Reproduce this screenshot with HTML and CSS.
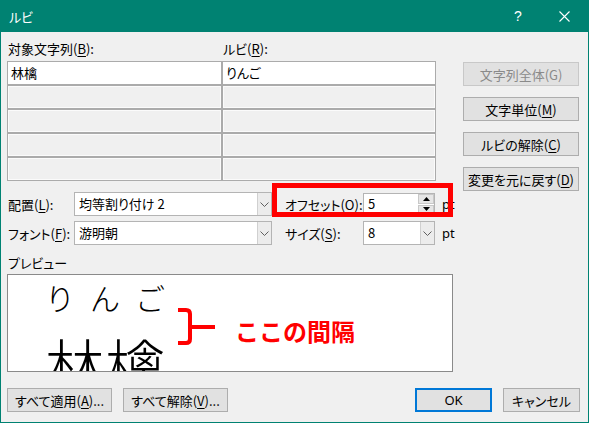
FILE: index.html
```html
<!DOCTYPE html>
<html lang="ja">
<head>
<meta charset="utf-8">
<title>ルビ</title>
<link rel="stylesheet" href="styles.css">
</head>
<body>
<div class="window">
  <div class="titlebar">
    <span class="title">ルビ</span>
    <span class="tb-btn help">?</span>
    <span class="tb-btn close">
      <svg width="11" height="11" viewBox="0 0 11 11"><path d="M0.5 0.5 L10.5 10.5 M10.5 0.5 L0.5 10.5" stroke="#fff" stroke-width="1.1" fill="none"/></svg>
    </span>
  </div>
  <div class="content">
    <div class="top">
      <div class="table-area">
        <div class="labels">
          <span class="lbl-base">対象文字列(<u>B</u>):</span>
          <span class="lbl-ruby">ルビ(<u>R</u>):</span>
        </div>
        <div class="grid">
          <div class="cell first">林檎</div>
          <div class="cell first">りんご</div>
          <div class="cell"></div><div class="cell"></div>
          <div class="cell"></div><div class="cell"></div>
          <div class="cell"></div><div class="cell"></div>
          <div class="cell"></div><div class="cell"></div>
        </div>
      </div>
      <div class="side">
        <div class="btn disabled">文字列全体(G)</div>
        <div class="btn">文字単位(<u>M</u>)</div>
        <div class="btn">ルビの解除(<u>C</u>)</div>
        <div class="btn">変更を元に戻す(<u>D</u>)</div>
      </div>
    </div>

    <div class="form">
      <div class="row">
        <span class="lbl1">配置(<u>L</u>):</span>
        <div class="combo wide"><span class="val">均等割り付け 2</span><span class="arrow"><svg width="9" height="5" viewBox="0 0 9 5"><path d="M0.5 0.5 L4.5 4.5 L8.5 0.5" stroke="#606060" fill="none"/></svg></span></div>
        <span class="lbl2">オフセット(<u>O</u>):</span>
        <div class="spin"><span class="val">5</span><span class="spin-btns"><span class="sb"><svg width="7" height="4" viewBox="0 0 7 4"><path d="M0 4 L3.5 0 L7 4 Z" fill="#000"/></svg></span><span class="sb"><svg width="7" height="4" viewBox="0 0 7 4"><path d="M0 0 L3.5 4 L7 0 Z" fill="#000"/></svg></span></span></div>
        <span class="unit">pt</span>
      </div>
      <div class="row">
        <span class="lbl1">フォント(<u>F</u>):</span>
        <div class="combo wide"><span class="val">游明朝</span><span class="arrow"><svg width="9" height="5" viewBox="0 0 9 5"><path d="M0.5 0.5 L4.5 4.5 L8.5 0.5" stroke="#606060" fill="none"/></svg></span></div>
        <span class="lbl2">サイズ(<u>S</u>):</span>
        <div class="combo small"><span class="val">8</span><span class="arrow"><svg width="9" height="5" viewBox="0 0 9 5"><path d="M0.5 0.5 L4.5 4.5 L8.5 0.5" stroke="#606060" fill="none"/></svg></span></div>
        <span class="unit">pt</span>
      </div>
    </div>

    <div class="preview-label">プレビュー</div>
    <div class="preview">
      <div class="word">
        <div class="ruby">りんご</div>
        <div class="base">林檎</div>
      </div>
      <div class="note">
        <svg class="bracket" width="37" height="39" viewBox="0 0 37 39"><path d="M0 2 H8 Q12 2 12 6 V31 Q12 35 8 35 H0 M12 19 H37" stroke="#ff0000" stroke-width="4" fill="none"/></svg>
        <span class="note-text">ここの間隔</span>
      </div>
    </div>

    <div class="footer">
      <div class="btn fbtn">すべて適用(<u>A</u>)...</div>
      <div class="btn fbtn">すべて解除(<u>V</u>)...</div>
      <div class="spacer"></div>
      <div class="btn ok">OK</div>
      <div class="btn cancel">キャンセル</div>
    </div>
  </div>
  <div class="highlight"></div>
</div>
</body>
</html>
```

FILE: styles.css
```css
html, body {
  margin: 0;
  padding: 0;
}
body {
  width: 589px;
  height: 423px;
  overflow: hidden;
  font-family: "Noto Sans CJK JP", "Noto Sans", sans-serif;
  font-size: 13px;
  color: #000;
  font-feature-settings: "palt";
}
u {
  text-decoration: underline;
  text-underline-offset: 2px;
}
.window {
  position: relative;
  width: 589px;
  height: 423px;
  box-sizing: border-box;
  border: 1px solid #008272;
  border-top: none;
  background: #f0f0f0;
}
.titlebar {
  height: 32px;
  background: #008272;
  color: #fff;
  display: flex;
  align-items: center;
  padding-left: 8px;
  padding-right: 1px;
}
.title {
  flex: 1;
  font-size: 13px;
}
.tb-btn {
  width: 46px;
  height: 32px;
  display: flex;
  align-items: center;
  justify-content: center;
}
.help {
  font-family: "Liberation Sans", sans-serif;
  font-size: 14px;
}
.content {
  padding: 8px 8px 0 6px;
}
.top {
  display: flex;
  gap: 27px;
  height: 151px;
}
.table-area {
  width: 429px;
}
.labels {
  display: flex;
  height: 21px;
  line-height: 17px;
}
.lbl-base {
  width: 215px;
  padding-left: 1px;
}
.grid {
  display: grid;
  grid-template-columns: 213px 212px;
  grid-auto-rows: 22px;
  gap: 2px;
  padding: 1px;
  background: #ababab;
}
.cell {
  background: #f0f0f0;
  box-shadow: inset 0 0 0 1px #fbfbfb;
  padding-left: 3px;
  line-height: 22px;
}
.cell.first {
  background: #fff;
  box-shadow: none;
}
.side {
  width: 116px;
  display: flex;
  flex-direction: column;
  gap: 11px;
  padding-top: 22px;
}
.btn {
  height: 24px;
  box-sizing: border-box;
  border: 1px solid #adadad;
  background: #e1e1e1;
  display: flex;
  align-items: center;
  justify-content: center;
  line-height: 1;
  white-space: nowrap;
}
.btn.disabled {
  border-color: #c8c8c8;
  color: #8a8a8a;
}
.form {
  margin-top: 1px;
  display: flex;
  flex-direction: column;
  gap: 5px;
}
.row {
  height: 24px;
  display: flex;
  align-items: center;
}
.lbl1 {
  width: 66px;
  padding-left: 1px;
}
.lbl2 {
  width: 78px;
  margin-left: 13px;
}
.unit {
  margin-left: 7px;
  font-family: "Noto Sans", sans-serif;
}
.combo {
  height: 24px;
  box-sizing: border-box;
  border: 1px solid #b4b4b4;
  background: #fff;
  display: flex;
}
.combo.wide {
  width: 198px;
}
.combo.small {
  width: 72px;
}
.val {
  flex: 1;
  padding-left: 4px;
  line-height: 22px;
}
.arrow {
  width: 13px;
  border-left: 1px solid #d0d0d0;
  background: #ececec;
  display: flex;
  align-items: center;
  justify-content: center;
}
.spin {
  width: 72px;
  height: 22px;
  box-sizing: border-box;
  border: 1px solid #b4b4b4;
  background: #fff;
  display: flex;
}
.spin .val {
  line-height: 20px;
}
.spin-btns {
  width: 16px;
  display: flex;
  flex-direction: column;
  gap: 1px;
  background: #fff;
}
.sb {
  flex: 1;
  background: #e6e6e6;
  border: 1px solid #c8c8c8;
  display: flex;
  align-items: center;
  justify-content: center;
}
.preview-label {
  margin-top: 9px;
  height: 17px;
  line-height: 17px;
  margin-bottom: 3px;
  padding-left: 1px;
}
.preview {
  width: 446px;
  height: 98px;
  box-sizing: border-box;
  border: 1px solid #8a8a8a;
  background: #fff;
  overflow: hidden;
  display: flex;
  align-items: flex-start;
  font-feature-settings: normal;
}
.word {
  margin-left: 37px;
  width: 120px;
  display: flex;
  flex-direction: column;
  font-weight: 300;
}
.ruby {
  font-size: 30px;
  line-height: 30px;
  letter-spacing: 15px;
  margin-top: 7px;
  white-space: nowrap;
}
.base {
  font-size: 60px;
  line-height: 60px;
  margin-top: 22px;
  white-space: nowrap;
}
.note {
  margin-left: 13px;
  margin-top: 33px;
  display: flex;
  align-items: flex-start;
}
.note-text {
  margin-left: 20px;
  margin-top: 11px;
  font-size: 24px;
  line-height: 24px;
  font-weight: bold;
  color: #ff0000;
  white-space: nowrap;
}
.footer {
  margin-top: 16px;
  display: flex;
  gap: 11px;
}
.fbtn {
  width: 105px;
}
.spacer {
  flex: 1;
}
.ok {
  width: 77px;
  border: 2px solid #0078d7;
  font-family: "Noto Sans", sans-serif;
}
.cancel {
  width: 77px;
}
.highlight {
  position: absolute;
  left: 271px;
  top: 183px;
  width: 181px;
  height: 34px;
  box-sizing: border-box;
  border: 5px solid #ff0000;
}
```
